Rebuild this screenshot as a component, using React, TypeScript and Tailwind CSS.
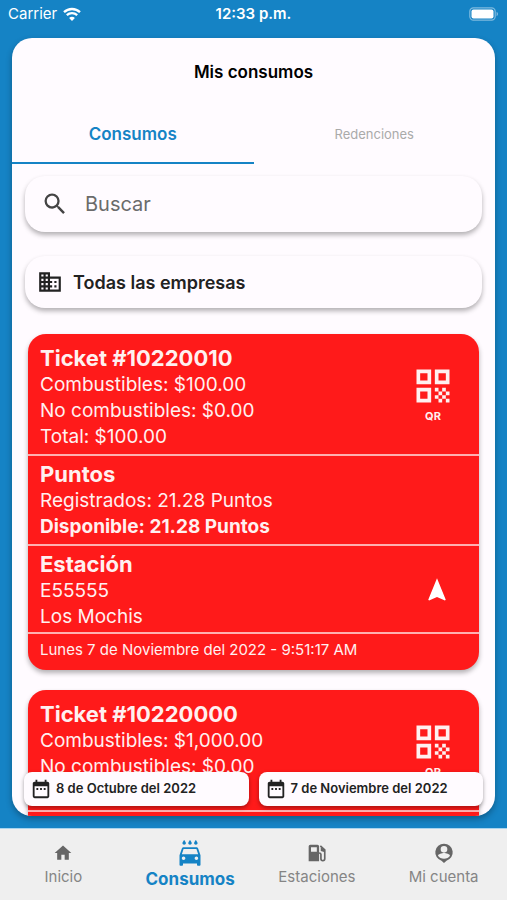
import type { ReactNode } from 'react';
import type { IconType } from 'react-icons';
import {
  MdBusiness,
  MdDateRange,
  MdHome,
  MdLocalCarWash,
  MdNavigation,
  MdQrCode,
  MdSearch,
} from 'react-icons/md';

type Ticket = {
  id: string;
  fuel: string;
  other: string;
  total?: string;
  points?: string;
  station?: string;
  city?: string;
  date?: string;
};

const tickets: Ticket[] = [
  {
    id: '10220010',
    fuel: '$100.00',
    other: '$0.00',
    total: '$100.00',
    points: '21.28',
    station: 'E55555',
    city: 'Los Mochis',
    date: 'Lunes 7 de Noviembre del 2022 - 9:51:17 AM',
  },
  { id: '10220000', fuel: '$1,000.00', other: '$0.00' },
];

function StatusBar() {
  return (
    <div className="grid h-7 grid-cols-3 items-center px-2 text-white">
      <div className="flex items-center gap-1.5 text-[15px]">
        Carrier
        <svg viewBox="0 0 18 14" className="h-3.5 w-[18px]" fill="none" stroke="currentColor" strokeWidth="2.3">
          <path d="M1 5.2C5.5.9 12.5.9 17 5.2" />
          <path d="M3.8 8.2c3-2.8 7.4-2.8 10.4 0" />
          <path d="M9 14 6.1 10.9c1.7-1.5 4.1-1.5 5.8 0z" fill="currentColor" stroke="none" />
        </svg>
      </div>
      <div className="text-center text-[15px] font-semibold whitespace-nowrap">12:33 p.m.</div>
      <svg viewBox="0 0 30 14" className="h-3.5 w-[30px] justify-self-end" fill="none">
        <rect x="0.8" y="0.8" width="25.4" height="12.4" rx="3.6" stroke="#fff" strokeOpacity=".45" strokeWidth="1.2" />
        <rect x="2.5" y="2.5" width="22" height="9" rx="2" fill="#fff" />
        <path d="M27.6 4.8c1.8.8 1.8 3.6 0 4.4z" fill="#fff" fillOpacity=".5" />
      </svg>
    </div>
  );
}

type SectionProps = { title: string; children: ReactNode; action?: ReactNode; className?: string };

function Section({ title, children, action, className = 'pt-1 pb-1' }: SectionProps) {
  return (
    <section className={`flex items-center justify-between border-b-2 border-[#ffb0b0] pr-6 pl-3 ${className}`}>
      <div className="text-[19px] leading-[26px]">
        <h2 className="text-[22px] leading-7 font-bold">{title}</h2>
        {children}
      </div>
      {action}
    </section>
  );
}

function TicketCard({ ticket }: { ticket: Ticket }) {
  return (
    <article className="overflow-hidden rounded-[18px] bg-[#ff1a1a] text-[#fff0f0] shadow-[0_3px_5px_rgba(0,0,0,0.3)]">
      <Section
        className="min-h-[122px] items-start pt-2.5 pb-1"
        title={`Ticket #${ticket.id}`}
        action={
          <button type="button" className="mt-5 flex flex-col items-center text-[11px] leading-4 font-bold">
            <MdQrCode className="size-11" />
            QR
          </button>
        }
      >
        <p>Combustibles: {ticket.fuel}</p>
        <p>No combustibles: {ticket.other}</p>
        {ticket.total && <p>Total: {ticket.total}</p>}
      </Section>
      {ticket.points && (
        <Section title="Puntos">
          <p>Registrados: {ticket.points} Puntos</p>
          <p className="font-bold">Disponible: {ticket.points} Puntos</p>
        </Section>
      )}
      {ticket.station && (
        <Section
          title="Estación"
          className="pt-1 pb-0.5"
          action={
            <button type="button" aria-label="Cómo llegar" className="pr-1">
              <MdNavigation className="size-7 text-white" />
            </button>
          }
        >
          <p>{ticket.station}</p>
          <p>{ticket.city}</p>
        </Section>
      )}
      <p className="min-h-9 px-3 pt-1.5 pb-2 text-[15px] leading-5">{ticket.date}</p>
    </article>
  );
}

function DateButton({ label }: { label: string }) {
  return (
    <button
      type="button"
      className="flex h-[34px] flex-1 items-center gap-1 rounded-lg bg-[#fffbff] px-1.5 text-[13px] font-semibold text-[#222] shadow-[0_2px_4px_rgba(0,0,0,0.35)]"
    >
      <MdDateRange className="size-[22px]" />
      {label}
    </button>
  );
}

function GasPump({ className }: { className?: string }) {
  return (
    <svg viewBox="0 0 24 24" className={className} fill="currentColor">
      <path fillRule="evenodd" d="M4 2h8.500a2 2 0 0 1 2 2v18H2V4a2 2 0 0 1 2-2zm.8 3.200v5.300h7V5.200z" />
      <path d="m16 3.500 5.300 4.800V19a2.300 2.300 0 0 1-4.600 0v-5.500c0-1-.7-1.500-2.200-1.500" fill="none" stroke="currentColor" strokeWidth="2" />
      <path d="M16.500 5v4.500l5 1.500V8z" />
    </svg>
  );
}

function PersonPin({ className }: { className?: string }) {
  return (
    <svg viewBox="0 0 24 24" className={className} fill="currentColor">
      <path
        fillRule="evenodd"
        d="M12 1a10.300 10.300 0 0 0-3 20.200l3 2.800 3-2.800A10.300 10.300 0 0 0 12 1zm0 2.600a4 4 0 1 1 0 8 4 4 0 0 1 0-8zm0 15.400c-3 0-5.800-1.300-7.200-3.600 0-2.200 4.800-3.400 7.200-3.400s7.200 1.200 7.200 3.400C17.800 17.700 15 19 12 19z"
      />
    </svg>
  );
}

const navItems: { label: string; icon: IconType | typeof GasPump; active?: boolean }[] = [
  { label: 'Inicio', icon: MdHome },
  { label: 'Consumos', icon: MdLocalCarWash, active: true },
  { label: 'Estaciones', icon: GasPump },
  { label: 'Mi cuenta', icon: PersonPin },
];

function BottomNav() {
  return (
    <nav className="grid h-[72px] shrink-0 grid-cols-4 border-t border-[#a8d4ee] bg-[#efefef]">
      {navItems.map(({ label, icon: Icon, active }) => (
        <a
          key={label}
          href="#"
          className={`flex flex-col items-center justify-center ${active ? 'text-[17px] leading-6 font-bold text-[#1583c5]' : 'gap-1 text-[15px] leading-5 text-[#858585]'}`}
        >
          <Icon className={active ? 'size-7' : 'size-5 text-[#666]'} />
          {label}
        </a>
      ))}
    </nav>
  );
}

export default function App() {
  return (
    <div className="flex h-screen flex-col bg-[#1583c5] font-['Inter','Liberation_Sans',sans-serif]">
      <StatusBar />
      <main className="relative mx-3 mt-2.5 mb-3 flex min-h-0 flex-1 flex-col overflow-hidden rounded-[20px] bg-[#fffbff] shadow-[0_3px_6px_rgba(0,0,0,0.3)]">
        <h1 className="pt-5 pb-5.5 text-center text-[17px] leading-7 font-semibold text-black">Mis consumos</h1>
        <div role="tablist" className="grid shrink-0 grid-cols-2">
          <button type="button" role="tab" aria-selected="true" className="h-14 border-b-2 border-[#1583c5] text-[17px] font-semibold text-[#1583c5]">
            Consumos
          </button>
          <button type="button" role="tab" aria-selected="false" className="h-14 border-b-2 border-transparent text-[13px] text-[#aaa]">
            Redenciones
          </button>
        </div>

        <div className="flex flex-col gap-6 px-[13px] pt-3">
          <label className="flex h-14 items-center gap-4 rounded-[20px] px-4 text-[#444] shadow-[0_3px_5px_rgba(0,0,0,0.3)]">
            <MdSearch className="size-7" />
            <input type="search" aria-label="Buscar" placeholder="Buscar" className="min-w-0 flex-1 bg-transparent text-[20px] outline-none placeholder:text-[#6b6b6b]" />
          </label>
          <button type="button" className="flex h-[52px] items-center gap-2.5 rounded-[20px] px-3 text-[18px] font-semibold text-[#222] shadow-[0_3px_5px_rgba(0,0,0,0.3)]">
            <MdBusiness className="size-[26px]" />
            Todas las empresas
          </button>
        </div>

        <div className="flex flex-col gap-5 px-4 pt-[26px]">
          {tickets.map((ticket) => (
            <TicketCard key={ticket.id} ticket={ticket} />
          ))}
        </div>

        <div className="absolute inset-x-3 bottom-2.5 flex gap-2.5">
          <DateButton label="8 de Octubre del 2022" />
          <DateButton label="7 de Noviembre del 2022" />
        </div>
      </main>
      <BottomNav />
    </div>
  );
}
